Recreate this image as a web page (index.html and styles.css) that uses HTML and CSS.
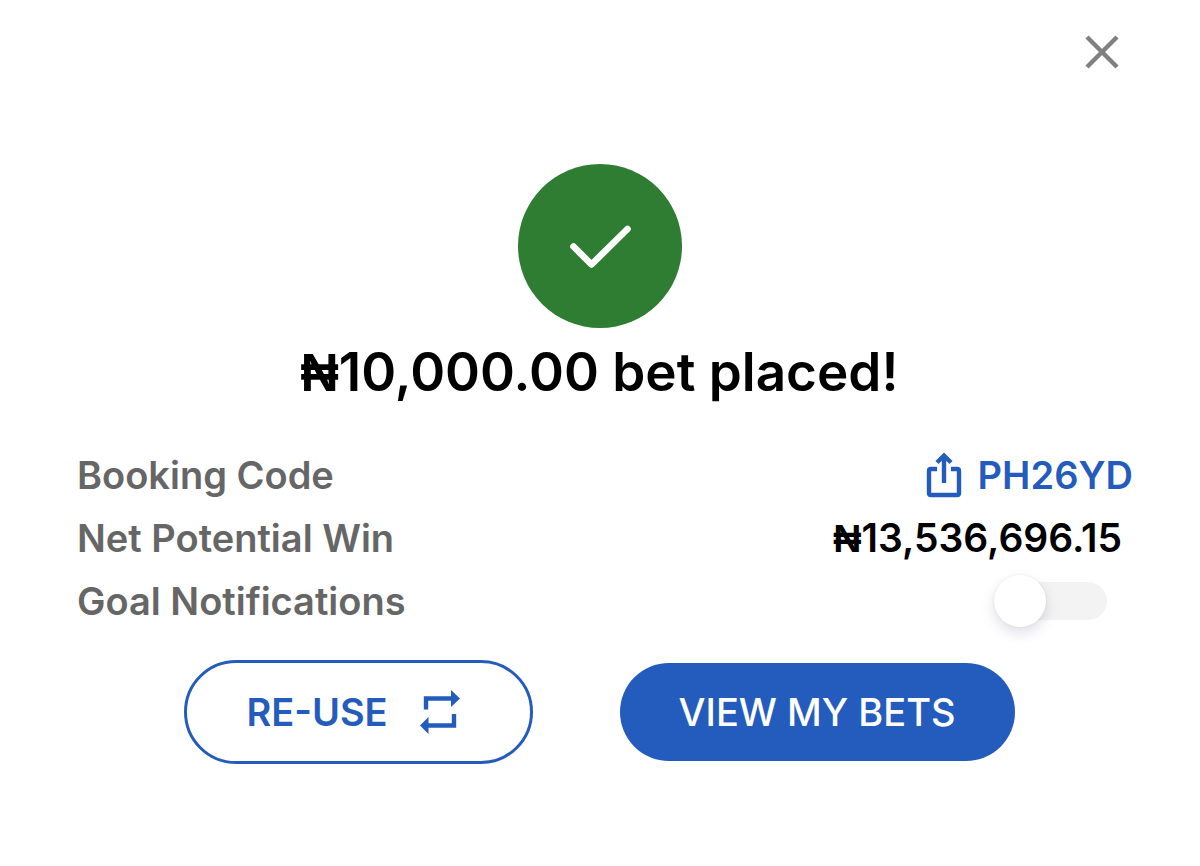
FILE: index.html
```html
<!DOCTYPE html>
<html lang="en">
<head>
<meta charset="utf-8">
<meta name="viewport" content="width=device-width, initial-scale=1">
<title>Bet placed</title>
<link rel="stylesheet" href="styles.css">
</head>
<body>
<main class="dialog">
  <header class="top">
    <button class="close" type="button" aria-label="Close">
      <svg width="34" height="34" viewBox="0 0 34 34" fill="none" stroke="#808080" stroke-width="4.4"><path d="M2 2 32 32M32 2 2 32"/></svg>
    </button>
  </header>
  <svg class="success" width="164" height="164" viewBox="0 0 164 164" aria-hidden="true">
    <circle cx="82" cy="82" r="82" fill="#2e7d32"/>
    <path d="M55.500 82.500 73.500 100.500 109.500 65" fill="none" stroke="#fff" stroke-width="6.600" stroke-linecap="round" stroke-linejoin="round"/>
  </svg>
  <h1 class="title"><span class="naira">₦</span>10,000.00 bet placed!</h1>
  <div class="details">
    <div class="row">
      <span class="label">Booking Code</span>
      <button class="code" type="button">
        <svg width="36" height="46" viewBox="0 0 36 46" fill="none" stroke="currentColor" stroke-width="4.400" aria-hidden="true"><path d="M11 17H5Q3 17 3 19V41Q3 43 5 43H31Q33 43 33 41V19Q33 17 31 17H25M18 31V4M11 10.500 18 3.500 25 10.500"/></svg>
        <span>PH26YD</span>
      </button>
    </div>
    <div class="row">
      <span class="label">Net Potential Win</span>
      <span class="amount"><span class="naira">₦</span>13,536,696.15</span>
    </div>
    <div class="row">
      <label class="label" for="goals">Goal Notifications</label>
      <input class="toggle" id="goals" type="checkbox" role="switch">
    </div>
  </div>
  <div class="actions">
    <button class="btn reuse" type="button">
      <span>RE-USE</span>
      <svg width="42" height="46" viewBox="0 0 42 46" aria-hidden="true"><path d="M7 20.500V9.500H33M35 25V36.500H9" fill="none" stroke="currentColor" stroke-width="4.400"/><path d="M32 1 41 9.500 32 18ZM9.500 28 1 36.500 9.500 45Z" fill="currentColor"/></svg>
    </button>
    <button class="btn view" type="button">VIEW MY BETS</button>
  </div>
</main>
</body>
</html>
```
FILE: styles.css
```css
* { box-sizing: border-box; }
body { margin: 0; background: #fff; color: #000; font-family: Inter, "Liberation Sans", sans-serif; }
button { margin: 0; padding: 0; border: 0; background: none; font: inherit; color: inherit; cursor: pointer; }
svg { display: block; }
.dialog { display: flex; flex-direction: column; padding: 35px 78px 0 77px; }
.top { display: flex; justify-content: flex-end; padding-right: 3px; }
.success { align-self: center; margin-top: 95px; }
.title { margin: 12px 0 0; text-align: center; font-size: 53px; line-height: 64px; font-weight: 600; }
.naira { font-family: "Liberation Sans", sans-serif; line-height: 1; }
.details { margin-top: 39px; font-size: 38px; font-weight: 600; }
.row { display: flex; align-items: center; justify-content: space-between; height: 63px; }
.label { color: #666; }
.code { display: flex; align-items: center; gap: 16px; margin-right: -11px; color: #245cbd; }
.amount { font-size: 39px; }
.toggle { appearance: none; position: relative; width: 112px; height: 38px; margin: 0 15px 0 0; border-radius: 19px; background: #f3f3f3; }
.toggle::before { content: ""; position: absolute; left: -1px; top: -7px; width: 52px; height: 52px; border-radius: 50%; background: #fff; box-shadow: 0 6px 14px #00005020, 0 0 3px #00000014; }
.actions { display: flex; justify-content: center; align-items: center; gap: 87px; margin-top: 28px; }
.btn { display: flex; align-items: center; border-radius: 52px; font-size: 38px; }
.reuse { height: 104px; padding: 0 69px 0 59px; gap: 31px; border: 3px solid #245cbd; color: #245cbd; font-weight: 600; }
.view { height: 98px; padding: 0 59px; background: #245cbd; color: #fff; font-weight: 500; }
```
